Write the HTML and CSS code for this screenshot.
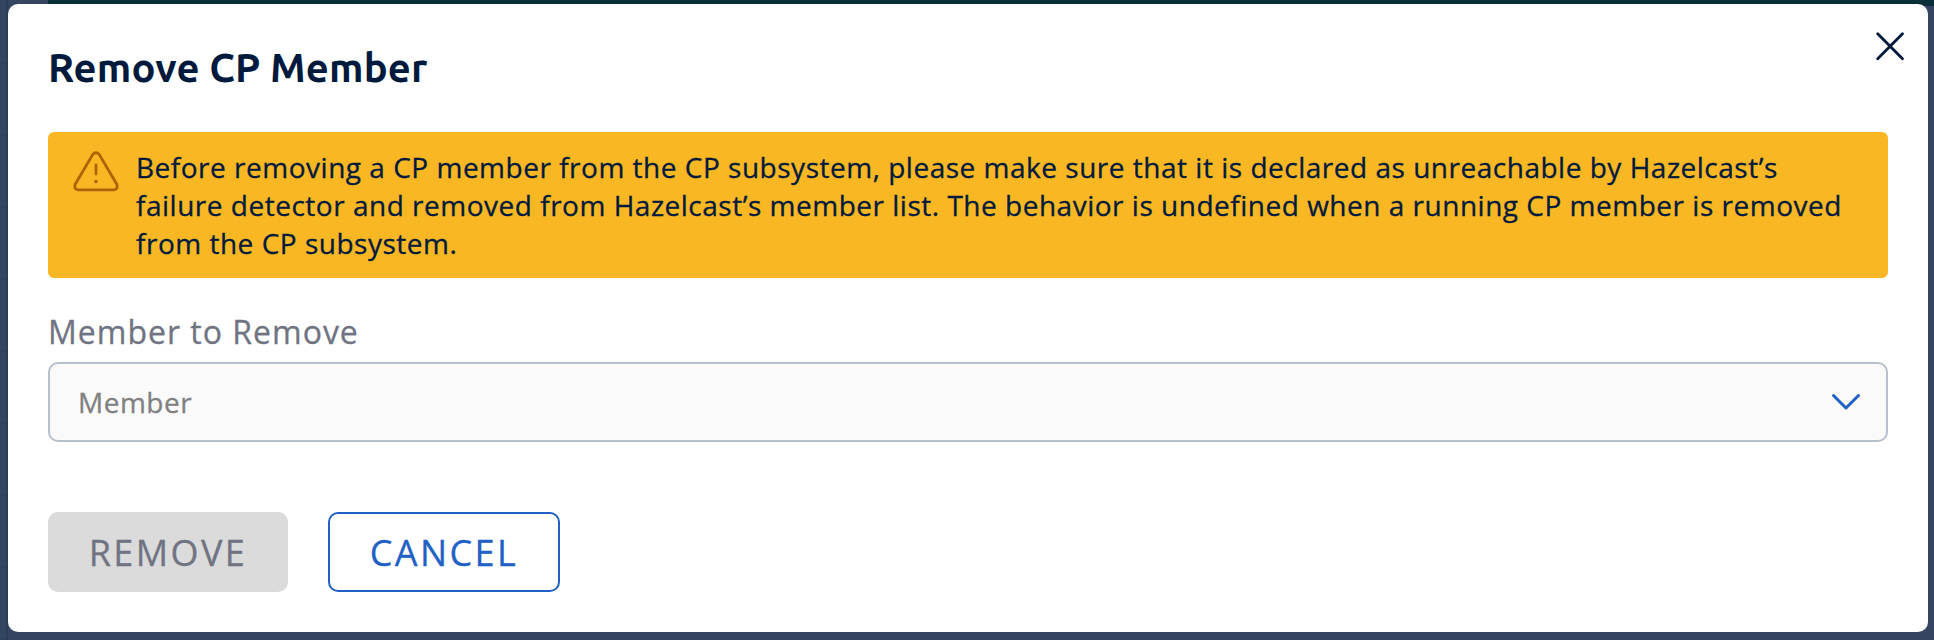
FILE: index.html
```html
<!DOCTYPE html>
<html lang="en">
<head>
<meta charset="utf-8">
<title>Remove CP Member</title>
<link rel="stylesheet" href="styles.css">
</head>
<body>
<div class="backdrop">
  <div class="topbar"></div>
  <div class="sidebar"></div>
  <main class="modal" role="dialog" aria-labelledby="title">
    <h1 class="title" id="title">Remove CP Member</h1>
    <button class="close" aria-label="Close">
      <svg width="32" height="32" viewBox="0 0 32 32"><path d="M3.7 3.7 28.5 28.7M28.5 3.7 3.7 28.7"/></svg>
    </button>
    <div class="alert">
      <svg class="alert-icon" width="48" height="44" viewBox="0 0 48 44">
        <path d="M20.7 4.6 3.2 34.2Q1.6 39.8 6.4 39.9H41.6Q46.4 39.8 44.8 34.2L27.3 4.6Q24 .9 20.7 4.6Z"/>
        <path class="mark" d="M24 15v9"/>
        <circle cx="24" cy="31.5" r="1.8"/>
      </svg>
      <p class="alert-text">Before removing a CP member from the CP subsystem, please make sure that it is declared as unreachable by Hazelcast’s<br>failure detector and removed from Hazelcast’s member list. The behavior is undefined when a running CP member is removed<br>from the CP subsystem.</p>
    </div>
    <div class="label">Member to Remove</div>
    <div class="select">
      <span class="placeholder">Member</span>
      <svg class="chevron" width="32" height="20" viewBox="0 0 32 20"><path d="M3.5 3.5 16 16 28.5 3.5"/></svg>
    </div>
    <div class="actions">
      <button class="btn btn-remove" disabled>REMOVE</button>
      <button class="btn btn-cancel">CANCEL</button>
    </div>
  </main>
</div>
</body>
</html>
```
FILE: styles.css
```css
* { box-sizing: border-box; }
body { margin: 0; font-family: "Open Sans", sans-serif; color: #001a3d; -webkit-text-stroke: 0.3px; }
.backdrop {
  position: relative;
  height: 640px;
  padding: 4px 6px 8px 8px;
  background: #36455f;
  overflow: hidden;
}
.topbar { position: absolute; top: 0; left: 48px; right: 0; height: 6px; background: #0a2f38; }
.sidebar {
  position: absolute; top: 0; left: 0; width: 8px; height: 640px;
  border-right: 2px solid #293c59;
  background: repeating-linear-gradient(#36455f 0 62px, #30405d 62px 64px, #36455f 64px 72px);
}
.modal {
  position: relative;
  height: 628px;
  padding: 36px 40px 0;
  border-radius: 10px;
  background: #fff;
}
.title {
  margin: 0 0 36px;
  height: 56px;
  font: 600 40px/56px Ubuntu, "Noto Sans", sans-serif;
  letter-spacing: 0.16px;
  white-space: nowrap;
  -webkit-text-stroke: 0;
}
.close {
  position: absolute; top: 26px; right: 22px;
  width: 32px; height: 32px; padding: 0;
  border: 0; background: none;
}
.close svg { display: block; fill: none; stroke: #001a3d; stroke-width: 2.8; stroke-linecap: round; }
.alert {
  display: flex;
  height: 146px;
  padding: 16px 24px 0;
  gap: 16px;
  border-radius: 6px;
  background: #f9b723;
}
.alert-icon { flex: none; margin-top: 2px; fill: none; stroke: #af6200; stroke-width: 2.8; stroke-linejoin: round; }
.alert-icon .mark { stroke-linecap: round; }
.alert-icon circle { fill: #af6200; stroke: none; }
.alert-text { margin: 0; font-size: 28px; line-height: 38px; letter-spacing: 0.51px; white-space: nowrap; }
.label { margin-top: 32px; height: 44px; line-height: 44px; font-size: 32px; letter-spacing: 1px; color: #707482; }
.select {
  display: flex; align-items: center; justify-content: space-between;
  height: 80px; margin-top: 8px; padding: 0 24px 0 28px;
  border: 2px solid #b6c1cc; border-radius: 10px; background: #fafafa;
}
.placeholder { font-size: 28px; line-height: 38px; letter-spacing: 0.5px; color: #808080; }
.chevron { fill: none; stroke: #2160c4; stroke-width: 3; stroke-linecap: round; stroke-linejoin: round; }
.actions { display: flex; gap: 40px; margin-top: 70px; }
.btn {
  height: 80px; padding: 2px 0 0; border: 2px solid; border-radius: 10px;
  font: 400 36px/48px "Open Sans", sans-serif; letter-spacing: 2.4px;
  -webkit-text-stroke: 0.3px;
}
.btn-remove { width: 240px; border-color: #dbdbdb; background: #dbdbdb; color: #707482; }
.btn-cancel { width: 232px; border-color: #2160c4; background: #fff; color: #2160c4; }
```
